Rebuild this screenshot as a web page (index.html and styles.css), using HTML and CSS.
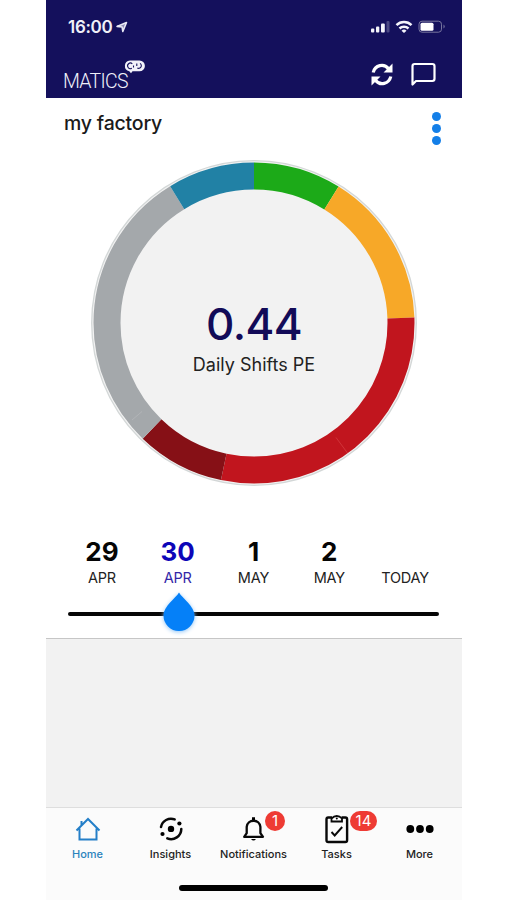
FILE: index.html
```html
<!DOCTYPE html>
<html lang="en">
<head>
<meta charset="utf-8">
<title>my factory</title>
<link rel="stylesheet" href="styles.css">
</head>
<body>
<div class="phone">
  <header class="header">
    <div class="status">
      <span class="time">16:00</span>
      <svg class="locate" width="12" height="12" viewBox="0 0 12 12"><path d="M1 5.400 10.500 1.500 6.800 10.500 6.100 6z" fill="#8e8cb4" stroke="#e9e9f5" stroke-width="1.600" stroke-linejoin="round"/></svg>
      <svg class="signals" width="75" height="14" viewBox="0 0 75 14">
        <g fill="#f4f4fb"><rect x="0" y="8.500" width="3.300" height="4" rx="1"/><rect x="5" y="6.500" width="3.300" height="6" rx="1"/><rect x="10" y="3.500" width="3.800" height="9" rx="1"/></g>
        <rect x="15.500" y="1" width="3" height="11.500" rx="1" fill="#4b4884"/>
        <g fill="none" stroke="#f4f4fb" stroke-width="2.500"><path d="M25.500 5.200a10.600 10.600 0 0 1 15 0"/><path d="M28.500 8.500a6.400 6.400 0 0 1 9 0"/></g>
        <path d="M33 13 30.500 10.700a3.600 3.600 0 0 1 5 0z" fill="#f4f4fb"/>
        <rect x="48" y="1.200" width="22.500" height="11" rx="3" fill="none" stroke="#77759f"/>
        <rect x="49.500" y="2.700" width="13" height="8" rx="1.500" fill="#fff"/>
        <path d="M72.500 4.500q2.500 2 0 4z" fill="#77759f"/>
      </svg>
    </div>
    <div class="brandbar">
      <div class="brand">MATICS</div>
      <svg class="bubble" width="22" height="14" viewBox="0 0 22 14">
        <path d="M6 .500h9.500a5.400 5.400 0 0 1 0 10.800H8.500L7 13.300 5.300 11.200A5.400 5.400 0 0 1 6 .500z" fill="#f2f2fa"/>
        <g fill="none" stroke="#14105c" stroke-width="1.100"><path d="M8.300 3.800a2.800 2.800 0 1 0-.5 4.500M9.500 5.500v2M12.800 3.500v2.500M16 3.400a2.600 2.600 0 1 1-2.700 4.600"/></g>
      </svg>
      <svg class="refresh" width="22" height="25" viewBox="0 0 22 25">
        <g fill="none" stroke="#fff" stroke-width="3.200"><path d="M2.200 10.500C4 3 13 .8 17.500 6.800"/><path d="M19.800 14.500C18 22 9 24.200 4.500 18.200"/></g>
        <path d="M21.500 1.500v9h-9zM.500 23.500v-9h9z" fill="#fff"/>
      </svg>
      <svg class="chat" width="26" height="25" viewBox="0 0 26 25"><path d="M2.500 22.500V4.200Q2.500 2 4.700 2h17.600q2.200 0 2.200 2.200v12.600q0 2.200-2.200 2.200H6z" fill="none" stroke="#fff" stroke-width="2.200" stroke-linejoin="round"/></svg>
    </div>
  </header>

  <main class="content">
    <div class="titlebar">
      <h1>my factory</h1>
      <div class="kebab"><i></i><i></i><i></i></div>
    </div>
    <div class="gauge">
      <svg class="ring" width="330" height="330" viewBox="-165 -165 330 330">
        <circle r="162.300" fill="#f2f2f2" stroke="#d3d7d7" stroke-width="1.300"/>
        <g fill="none" stroke-width="27" transform="rotate(-90)">
          <circle r="147" pathLength="360" stroke="#1caa18" stroke-dasharray="31.800 360"/>
          <circle r="147" pathLength="360" stroke="#f7a828" stroke-dasharray="56.200 360" stroke-dashoffset="-31.800"/>
          <circle r="147" pathLength="360" stroke="#c1151e" stroke-dasharray="103.900 360" stroke-dashoffset="-88"/>
          <circle r="147" pathLength="360" stroke="#861016" stroke-dasharray="32 360" stroke-dashoffset="-191.900"/>
          <circle r="147" pathLength="360" stroke="#a4a8ab" stroke-dasharray="104.600 360" stroke-dashoffset="-223.900"/>
          <circle r="147" pathLength="360" stroke="#2181a5" stroke-dasharray="31.500 360" stroke-dashoffset="-328.500"/>
        </g>
        <path d="M82 114.500 93.500 130" stroke="#d33b40" stroke-width=".8"/>
        <path d="M-112 88.500-122 97" stroke="#b5b8ba" stroke-width=".8"/>
      </svg>
      <div class="reading">
        <div class="value">0.44</div>
        <div class="caption">Daily Shifts PE</div>
      </div>
    </div>
    <div class="days">
      <div class="day"><b>29</b><span>APR</span></div>
      <div class="day active"><b>30</b><span>APR</span></div>
      <div class="day"><b>1</b><span>MAY</span></div>
      <div class="day"><b>2</b><span>MAY</span></div>
      <div class="day"><span>TODAY</span></div>
    </div>
    <div class="slider">
      <svg class="thumb" width="38" height="46" viewBox="0 0 38 46"><path d="M19 2.500C22 8 34.500 16 34.500 25.500a15.500 15.500 0 0 1-31 0C3.500 16 16 8 19 2.500z" fill="#0580f8"/></svg>
    </div>
  </main>

  <section class="blank"></section>

  <nav class="tabs">
    <a class="tab current">
      <svg width="28" height="30" viewBox="0 0 28 30"><path d="M2.500 16.500 14 5l11.500 11.500M5.500 14.500V25.500h17V14.500M7.500 11.500V7" fill="none" stroke="#247fc8" stroke-width="2"/></svg>
      <span>Home</span>
    </a>
    <a class="tab">
      <svg width="28" height="30" viewBox="0 0 28 30"><g fill="none" stroke="#080808" stroke-width="2.500" stroke-linecap="round"><path d="M4 13A10.200 10.200 0 0 1 17.700 5.400"/><path d="M24.300 15A10.200 10.200 0 0 1 10.300 24.400"/></g><circle cx="14" cy="14.900" r="3.200"/><circle cx="22.400" cy="9.500" r="2.100"/><circle cx="5.500" cy="20" r="2.100"/></svg>
      <span>Insights</span>
    </a>
    <a class="tab">
      <svg width="28" height="30" viewBox="0 0 28 30"><path d="M4.200 22.800h18.800l-2.600-3.600V12.800A6.900 6.900 0 0 0 6.700 12.800v6.400z" fill="none" stroke="#080808" stroke-width="2.300" stroke-linejoin="round"/><path d="M12 6V3.200h3V6zM11 25h5q-2.500 3-5 0z"/></svg>
      <span>Notifications</span>
      <em class="badge one">1</em>
    </a>
    <a class="tab">
      <svg width="28" height="30" viewBox="0 0 28 30"><path d="M9 3.500H5.200Q3.500 3.500 3.500 5.200v21q0 1.800 1.800 1.800h17q1.800 0 1.800-1.800v-21q0-1.700-1.700-1.700H18.500" fill="none" stroke="#080808" stroke-width="2.400"/><path d="M8.500 7.500V4.500Q11 2 13.800 2T19 4.500v3z" fill="#fff" stroke="#080808" stroke-width="1.800"/><circle cx="13.800" cy="4.600" r="1"/><path d="m8.500 18 3.200 3.500 7.500-8.500" fill="none" stroke="#080808" stroke-width="1.900"/></svg>
      <span>Tasks</span>
      <em class="badge many">14</em>
    </a>
    <a class="tab">
      <svg width="28" height="30" viewBox="0 0 28 30"><circle cx="4.300" cy="15" r="3.900"/><circle cx="14" cy="15" r="3.900"/><circle cx="23.700" cy="15" r="3.900"/></svg>
      <span>More</span>
    </a>
    <div class="homebar"></div>
  </nav>
</div>
</body>
</html>
```
FILE: styles.css
```css
* { box-sizing: border-box; }
body { margin: 0; background: #fff; font-family: Inter, "Liberation Sans", sans-serif; }
.phone { width: 416px; height: 900px; margin-left: 46px; display: flex; flex-direction: column; }

.header { height: 98px; background: #14105c; color: #f0f0f8; padding: 17px 18px 0; }
.status { display: flex; align-items: center; height: 20px; padding-left: 4px; }
.time { font-size: 17px; font-weight: 600; letter-spacing: -0.3px; }
.locate { margin-left: 4px; }
.signals { margin-left: auto; margin-right: -2px; }
.brandbar { display: flex; align-items: flex-start; height: 38px; padding-top: 22px; }
.brand { font: 300 19.500px/24px Roboto, sans-serif; letter-spacing: -0.7px; margin-left: -1px; padding-top: 12px; margin-top: -1px; width: 61px; color: #f0f0fa; }
.bubble { margin-top: 1px; }
.refresh { margin-left: auto; margin-top: 3px; }
.chat { margin: 3px 8px 0 17px; }

.content { height: 541px; background: #fff; border-bottom: 1.500px solid #c6c6c6; flex: none; }
.titlebar { display: flex; justify-content: space-between; height: 60px; padding: 13px 21px 0 18px; }
h1 { margin: 0; font-size: 19.500px; line-height: 24px; font-weight: 550; letter-spacing: -0.2px; color: #1a1a1a; }
.kebab { display: flex; flex-direction: column; gap: 3px; padding-top: 1px; }
.kebab i { width: 9px; height: 9px; border-radius: 50%; background: #147fe8; }
.gauge { display: grid; justify-content: center; height: 330px; }
.ring, .reading { grid-area: 1 / 1; }
.reading { padding-top: 139px; text-align: center; }
.value { font-size: 44px; line-height: 54px; font-weight: 550; letter-spacing: -0.6px; color: #120b58; }
.caption { font-size: 18px; line-height: 24px; color: #222; margin-top: 2px; }

.days { display: grid; grid-template-columns: repeat(5, 75.800px); padding: 45px 0 0 18px; height: 107px; }
.day { display: flex; flex-direction: column; align-items: center; justify-content: flex-end; height: 54px; color: #050505; }
.day b { font-size: 26px; line-height: 30px; font-weight: 700; }
.day span { font-size: 14.500px; line-height: 18px; letter-spacing: -0.2px; margin-top: 2px; color: #222; }
.active b { color: #0d06b8; }
.active span { color: #3327a8; }
.slider { margin: 17px 23px 0 22px; height: 4px; border-radius: 2px; background: #060606; position: relative; }
.thumb { position: absolute; left: 92px; top: -22px; filter: drop-shadow(0 1px 2px #8fc5f7); }

.blank { height: 168px; background: #f2f2f2; }
.tabs { flex: 1; display: grid; grid-template-columns: repeat(5, 83px); grid-template-rows: 77px 6px; background: #fbfbfb; border-top: 1.500px solid #dedede; }
.tab { position: relative; display: flex; flex-direction: column; align-items: center; padding-top: 6px; color: #222; }
.tab span { font-size: 11px; line-height: 14px; font-weight: 550; margin-top: 3px; }
.current span { color: #2c83bd; }
.badge { position: absolute; top: 3px; height: 20px; border-radius: 10px; background: #ee3b34; color: #fff; font: 15px/20px Inter, sans-serif; text-align: center; }
.one { left: 53px; width: 20px; }
.many { left: 55px; width: 27px; }
.homebar { grid-column: 1 / -1; justify-self: center; width: 149px; height: 6px; border-radius: 3px; background: #000; }
```
